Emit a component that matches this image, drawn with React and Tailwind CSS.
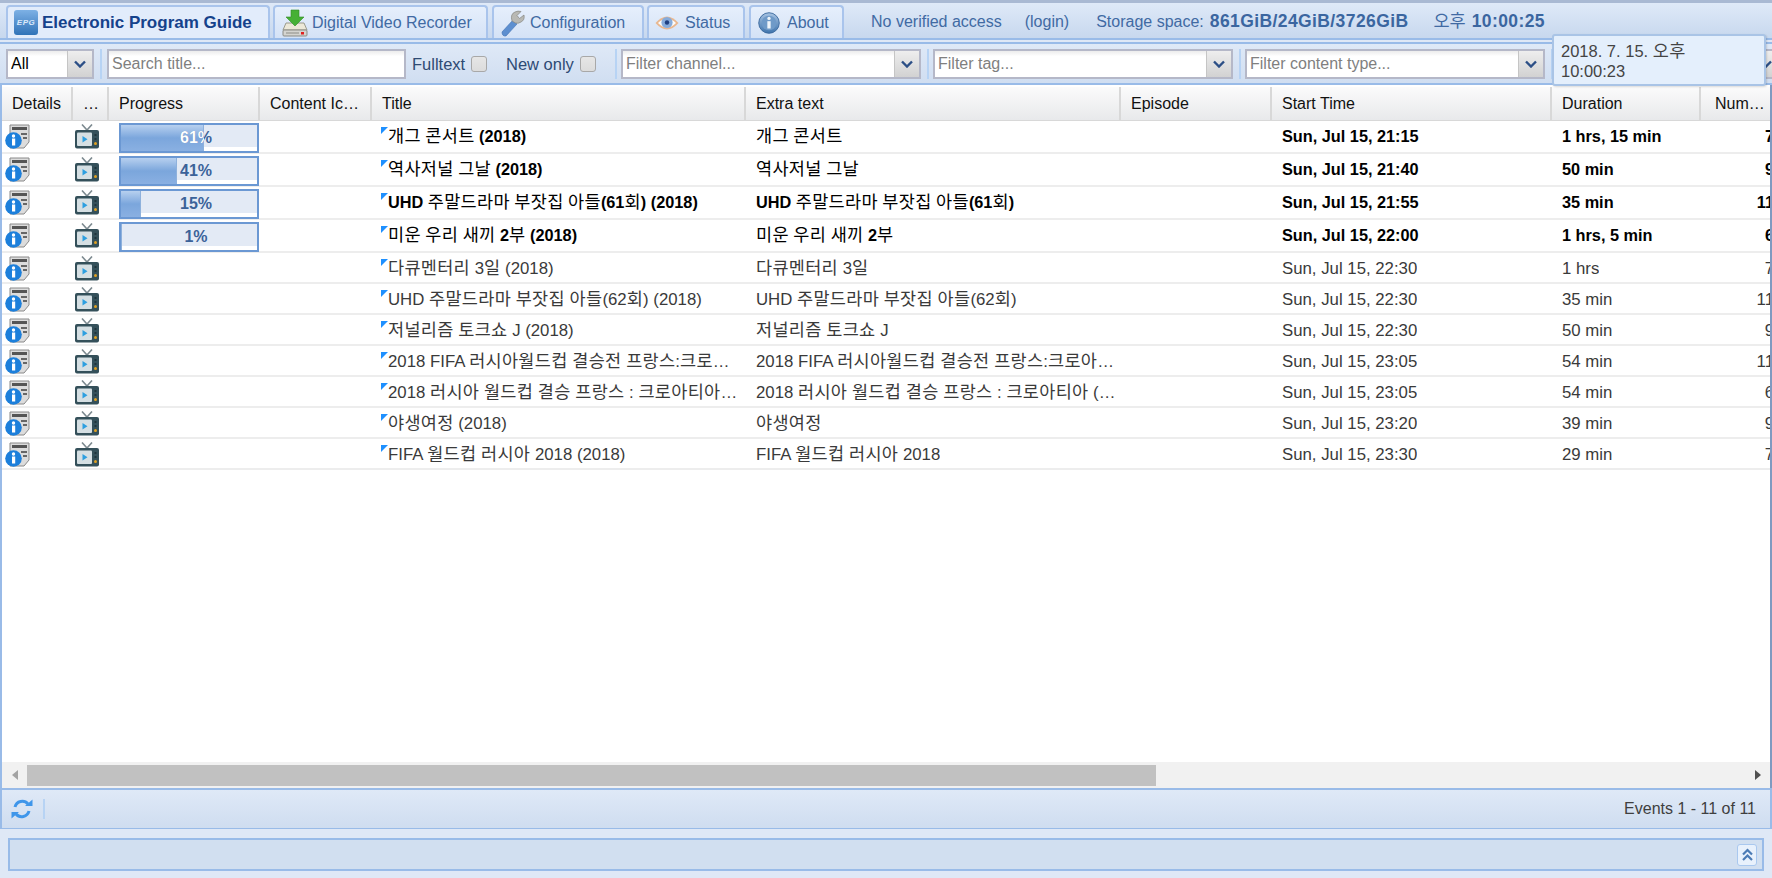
import { useId } from 'react'

const rows = [
  { title: '개그 콘서트 (2018)', extra: '개그 콘서트', start: 'Sun, Jul 15, 21:15', duration: '1 hrs, 15 min', num: '7', progress: 61 },
  { title: '역사저널 그날 (2018)', extra: '역사저널 그날', start: 'Sun, Jul 15, 21:40', duration: '50 min', num: '9', progress: 41 },
  { title: 'UHD 주말드라마 부잣집 아들(61회) (2018)', extra: 'UHD 주말드라마 부잣집 아들(61회)', start: 'Sun, Jul 15, 21:55', duration: '35 min', num: '11', progress: 15 },
  { title: '미운 우리 새끼 2부 (2018)', extra: '미운 우리 새끼 2부', start: 'Sun, Jul 15, 22:00', duration: '1 hrs, 5 min', num: '6', progress: 1 },
  { title: '다큐멘터리 3일 (2018)', extra: '다큐멘터리 3일', start: 'Sun, Jul 15, 22:30', duration: '1 hrs', num: '7' },
  { title: 'UHD 주말드라마 부잣집 아들(62회) (2018)', extra: 'UHD 주말드라마 부잣집 아들(62회)', start: 'Sun, Jul 15, 22:30', duration: '35 min', num: '11' },
  { title: '저널리즘 토크쇼 J (2018)', extra: '저널리즘 토크쇼 J', start: 'Sun, Jul 15, 22:30', duration: '50 min', num: '9' },
  { title: '2018 FIFA 러시아월드컵 결승전 프랑스:크로아티아 (2018)', extra: '2018 FIFA 러시아월드컵 결승전 프랑스:크로아티아 (결승)', start: 'Sun, Jul 15, 23:05', duration: '54 min', num: '11' },
  { title: '2018 러시아 월드컵 결승 프랑스 : 크로아티아 (결승) (2018)', extra: '2018 러시아 월드컵 결승 프랑스 : 크로아티아 (결승)', start: 'Sun, Jul 15, 23:05', duration: '54 min', num: '6' },
  { title: '야생여정 (2018)', extra: '야생여정', start: 'Sun, Jul 15, 23:20', duration: '39 min', num: '9' },
  { title: 'FIFA 월드컵 러시아 2018 (2018)', extra: 'FIFA 월드컵 러시아 2018', start: 'Sun, Jul 15, 23:30', duration: '29 min', num: '7' },
]

const gridCols = 'grid grid-cols-[71px_36px_151px_112px_374px_375px_151px_280px_149px_100px]'

// hangul stays regular weight and a little larger, the way the page renders it
function Mixed({ text }) {
  return text.split(/([가-힣]+)/).map((part, i) =>
    /[가-힣]/.test(part) ? (
      <span key={i} className="text-[17.5px] font-normal tracking-[0.3px]">{part}</span>
    ) : (
      part
    )
  )
}

function EpgLogo() {
  return (
    <span className="flex h-[25px] w-[24px] shrink-0 items-center justify-center rounded-[3px] bg-linear-to-b from-[#7db1e5] to-[#2f73b8]">
      <span className="text-[8px] font-bold italic leading-none tracking-[0.5px] text-[#dbeafa]">EPG</span>
    </span>
  )
}

function DownloadIcon() {
  return (
    <svg width="26" height="28" viewBox="0 0 26 28" className="shrink-0">
      <path d="M4 14 L22 14 L25 21 L1 21 Z" fill="#ece8d8" stroke="#9a9a8c" />
      <rect x="1" y="21" width="24" height="6" rx="1" fill="#d4d4d0" stroke="#8b8b85" />
      <rect x="4" y="23.5" width="13" height="1" fill="#8b8b85" />
      <rect x="19" y="23" width="3" height="2.5" fill="#e02020" />
      <path d="M9 1 H17 V8 H22 L13 17 L4 8 H9 Z" fill="#46b035" stroke="#2f8c25" strokeWidth="0.6" />
    </svg>
  )
}

function WrenchIcon() {
  return (
    <svg width="26" height="28" viewBox="0 0 26 28" className="shrink-0">
      <path d="M2 23 L13 11 L17 15 L6 27 Q2 27.5 2 23 Z" fill="#5d8fd0" stroke="#3f70b2" strokeWidth="0.6" />
      <path d="M12 12 Q10 5 15 3 Q18 1.5 21 2.5 L17 6.5 L19.5 9.5 L24 6 Q25 11 21 13 Q18 15 15.5 14 Z" fill="#b9b9b4" stroke="#85857f" strokeWidth="0.7" />
    </svg>
  )
}

function EyeIcon() {
  return (
    <svg width="24" height="18" viewBox="0 0 24 18" className="shrink-0">
      <path d="M0.5 9 Q12 -4 23.5 9 Q12 22 0.5 9 Z" fill="#e9b78f" />
      <path d="M3 9 Q12 0 21 9 Q12 18 3 9 Z" fill="#fbfbfb" />
      <circle cx="12" cy="8.5" r="5.6" fill="#86abdb" />
      <circle cx="12" cy="8.5" r="2.2" fill="#1f3f80" />
    </svg>
  )
}

function InfoIcon() {
  const id = useId()
  return (
    <svg width="22" height="22" viewBox="0 0 24 24" className="shrink-0">
      <defs>
        <linearGradient id={id} x1="0" y1="0" x2="0" y2="1">
          <stop offset="0" stopColor="#a7c3e2" />
          <stop offset="1" stopColor="#3f74ad" />
        </linearGradient>
      </defs>
      <circle cx="12" cy="12" r="11.2" fill={`url(#${id})`} stroke="#3a689c" />
      <circle cx="12" cy="12" r="8" fill="#6f9ac8" />
      <circle cx="12" cy="7" r="1.8" fill="#eef4fa" />
      <rect x="10.2" y="10" width="3.6" height="8" fill="#eef4fa" />
    </svg>
  )
}

function DetailsIcon() {
  return (
    <svg width="25" height="25" viewBox="0 0 25 25" className="shrink-0">
      <path d="M5 1 H24 V18 L19 24 H5 Z" fill="#dcdcdc" stroke="#8a8a8a" />
      <rect x="7" y="3" width="15" height="3" fill="#555" />
      <rect x="16" y="9" width="6" height="2" fill="#666" />
      <rect x="18" y="13" width="4" height="2" fill="#666" />
      <circle cx="8.5" cy="16.5" r="8.3" fill="#1c7fdb" />
      <circle cx="8.5" cy="12" r="1.7" fill="#fff" />
      <rect x="7" y="14.5" width="3.2" height="7" fill="#fff" />
    </svg>
  )
}

function TvIcon() {
  return (
    <svg width="24" height="25" viewBox="0 0 24 25" className="shrink-0">
      <path d="M7 0.5 L12 6 L17 0.5" fill="none" stroke="#7d8a90" strokeWidth="1.6" />
      <rect x="0" y="6" width="24" height="18.5" rx="2" fill="#34505a" />
      <rect x="2" y="8.5" width="15" height="13.5" rx="1" fill="#d5dfe3" />
      <path d="M7.5 12 L12.5 15.2 L7.5 18.5 Z" fill="#2d9fe0" />
      <circle cx="20.5" cy="19.5" r="1.5" fill="#e0a020" />
      <rect x="19.5" y="10" width="2" height="2" fill="#1f343c" />
      <rect x="19.5" y="14" width="2" height="2" fill="#1f343c" />
    </svg>
  )
}

function RefreshIcon() {
  return (
    <svg width="22" height="22" viewBox="0 0 22 22" className="shrink-0">
      <path d="M4 9 A7.5 7.5 0 0 1 17 6" fill="none" stroke="#3f96ea" strokeWidth="3" />
      <path d="M14 8 H21.5 V1.5 Z" fill="#3f96ea" />
      <path d="M18 13 A7.5 7.5 0 0 1 5 16" fill="none" stroke="#3f96ea" strokeWidth="3" />
      <path d="M8 14 H0.5 V20.5 Z" fill="#3f96ea" />
    </svg>
  )
}

function Tab({ icon, label, active, className }) {
  return (
    <div
      className={`flex h-[33px] items-center rounded-t-[4px] border-2 border-b-0 border-[#a9c4ec] ${
        active ? 'bg-[#e2ecfb] font-bold text-[#15428b]' : 'bg-linear-to-b from-[#e6effc] to-[#d4e2f6] text-[#416aa3]'
      } ${className}`}
    >
      {icon}
      <span className="whitespace-nowrap">{label}</span>
    </div>
  )
}

function Separator() {
  return <div className="ml-[6px] mr-[4px] h-[30px] w-[2px] shrink-0 bg-[#b7d3f4]" />
}

function Combo({ placeholder, value, className }) {
  return (
    <div className={`flex h-[30px] shrink-0 border-2 border-[#b5b8c8] ${className}`}>
      <input
        readOnly
        value={value}
        placeholder={placeholder}
        className="h-full w-full min-w-0 bg-linear-to-b from-[#ececec] to-white to-[20%] px-[3px] text-black outline-none placeholder:text-[#807f7f]"
      />
      <div className="flex w-[25px] shrink-0 items-center justify-center border-l border-[#c5c5c5] bg-linear-to-b from-[#eeeeee] to-[#d2d2d2]">
        <svg width="12" height="8" viewBox="0 0 12 8">
          <path d="M1 1.5 L6 6.5 L11 1.5" fill="none" stroke="#2c4f86" strokeWidth="2.4" />
        </svg>
      </div>
    </div>
  )
}

function Checkbox() {
  return <input type="checkbox" readOnly className="block h-[16px] w-[16px] shrink-0 appearance-none rounded-[3px] border border-[#a8a8a8] bg-linear-to-b from-[#e6e6e6] to-[#dcdcdc]" />
}

function ProgressBar({ value }) {
  return (
    <div className="relative h-[30px] w-[140px] border-2 border-[#6b98d3] bg-[#e3eaf5] text-[16px]">
      <div className="absolute inset-x-0 bottom-0 h-[4px] bg-white" />
      <div className="absolute inset-y-0 left-0 border-r border-[#8eb1dc] bg-linear-to-b from-[#b7d0ef] via-[#7ba6dc] to-[#8ab0e2]" style={{ width: `${value}%` }} />
      <div className="absolute inset-0 flex items-center justify-center pl-[14px] font-bold text-[#3b6299]">{value}%</div>
      {value > 50 && (
        <div className="absolute inset-y-0 left-0 overflow-hidden" style={{ width: `${value}%` }}>
          <div className="flex h-full w-[136px] items-center justify-center pl-[14px] font-bold text-white">{value}%</div>
        </div>
      )}
    </div>
  )
}

function HeaderCell({ label, className = '' }) {
  return (
    <div className={`flex h-[34px] items-center overflow-hidden border-b border-r-2 border-[#d8d8d8] bg-linear-to-b from-[#fbfbfb] to-[#e8e9eb] pl-[10px] pr-[6px] pt-[1px] ${className}`}>
      <span className="whitespace-nowrap">{label}</span>
    </div>
  )
}

function Row({ row }) {
  const live = row.progress !== undefined
  const cell = `flex items-center overflow-hidden ${live ? 'pb-[1px]' : 'pt-[2px]'}`
  return (
    <div className={`${gridCols} border-b-2 border-[#ededed] ${live ? 'h-[33px] text-[16.3px] font-bold text-black' : 'h-[31px] text-[16.8px] text-[#3a3a3a]'}`}>
      <div className="pl-[3px] pt-[3px]"><DetailsIcon /></div>
      <div className="pl-[2px] pt-[3px]"><TvIcon /></div>
      <div className="pl-[10px] pt-[2px]">{live && <ProgressBar value={row.progress} />}</div>
      <div />
      <div className={`relative pl-[10px] pr-[8px] ${cell}`}>
        <span className="absolute left-[9px] top-[6px] h-0 w-0 border-r-[7px] border-t-[7px] border-r-transparent border-t-[#1e90ff]" />
        <span className="truncate pl-[6px]"><Mixed text={row.title} /></span>
      </div>
      <div className={`pl-[10px] pr-[2px] ${cell}`}><span className="truncate"><Mixed text={row.extra} /></span></div>
      <div />
      <div className={`pl-[10px] ${cell}`}><span className="truncate">{row.start}</span></div>
      <div className={`pl-[10px] ${cell}`}><span className="truncate">{row.duration}</span></div>
      <div className={`justify-end pr-[27px] ${cell}`}>{row.num}</div>
    </div>
  )
}

const headers = ['Details', '…', 'Progress', 'Content Ic…', 'Title', 'Extra text', 'Episode', 'Start Time', 'Duration']

export default function App() {
  return (
    <div className="relative flex h-screen w-full flex-col overflow-hidden bg-[#dfe8f6] text-[16px] text-[#111] [font-family:'Liberation_Sans','Noto_Sans_CJK_KR',sans-serif]">
      {/* top tabs */}
      <div className="h-[3px] shrink-0 bg-[#a9b9d3]" />
      <div className="flex h-[35px] shrink-0 items-end bg-linear-to-b from-[#dfe9f8] to-[#c7d8ee] pl-[6px]">
        <Tab active label="Electronic Program Guide" icon={<EpgLogo />} className="w-[264px] gap-[4px] pl-[6px] text-[17px]" />
        <Tab label="Digital Video Recorder" icon={<DownloadIcon />} className="ml-[3px] w-[215px] gap-[4px] pl-[7px]" />
        <Tab label="Configuration" icon={<WrenchIcon />} className="ml-[4px] w-[152px] gap-[4px] pl-[6px]" />
        <Tab label="Status" icon={<EyeIcon />} className="ml-[3px] w-[98px] gap-[6px] pl-[6px]" />
        <Tab label="About" icon={<InfoIcon />} className="ml-[4px] w-[95px] gap-[7px] pl-[7px]" />
        <div className="flex h-[33px] items-center whitespace-nowrap text-[#416aa3]">
          <span className="ml-[27px]">No verified access</span>
          <span className="ml-[23px]">(login)</span>
          <span className="ml-[27px]">Storage space:</span>
          <span className="ml-[6px] text-[17.5px] font-bold tracking-[0.4px] text-[#3b66a0]">861GiB/24GiB/3726GiB</span>
          <span className="ml-[25px] text-[17.5px]">오후</span>
          <span className="ml-[6px] text-[17.5px] font-bold tracking-[0.4px] text-[#3b66a0]">10:00:25</span>
        </div>
      </div>
      <div className="h-[2px] shrink-0 bg-[#99bbe8]" />
      <div className="h-[2px] shrink-0 bg-[#dfe8f6]" />
      <div className="h-[2px] shrink-0 bg-[#99bbe8]" />

      {/* filter toolbar */}
      <div className="flex h-[41px] shrink-0 items-center overflow-hidden border-b-2 border-[#99bbe8] bg-linear-to-b from-[#dfe9f7] to-[#d0def1] pl-[6px] pt-[1px] text-[#333]">
        <Combo value="All" className="w-[88px]" />
        <Separator />
        <input readOnly placeholder="Search title..." className="ml-[1px] h-[30px] w-[299px] shrink-0 border-2 border-[#b5b8c8] bg-linear-to-b from-[#ececec] to-white to-[20%] px-[3px] outline-none placeholder:text-[#807f7f]" />
        <span className="ml-[6px] w-[53px] shrink-0 whitespace-nowrap text-[16.5px] text-[#2e4a73]">Fulltext</span>
        <span className="ml-[6px]"><Checkbox /></span>
        <span className="ml-[19px] w-[68px] shrink-0 whitespace-nowrap text-[16.5px] text-[#2e4a73]">New only</span>
        <span className="ml-[6px]"><Checkbox /></span>
        <div className="ml-[13px]"><Separator /></div>
        <Combo placeholder="Filter channel..." className="w-[300px]" />
        <Separator />
        <Combo placeholder="Filter tag..." className="w-[300px]" />
        <Separator />
        <Combo placeholder="Filter content type..." className="w-[300px]" />
        <Separator />
        <Combo className="w-[223px]" />
      </div>

      {/* grid */}
      <div className="flex min-h-0 flex-1 flex-col border-l-2 border-r-2 border-l-[#99bbe8] border-r-[#7f9ac0] bg-white">
        <div className="min-h-0 flex-1 overflow-hidden">
          <div className="w-[2690px] pt-[2px]">
            <div className={gridCols}>
              {headers.map((label) => (
                <HeaderCell key={label} label={label} />
              ))}
              <HeaderCell label="Num…" className="border-r-0 pl-[14px]" />
            </div>
            {rows.map((row) => (
              <Row key={row.start + row.title} row={row} />
            ))}
          </div>
        </div>

        {/* horizontal scrollbar */}
        <div className="flex h-[26px] shrink-0 items-center bg-[#f1f1f1]">
          <div className="flex w-[25px] shrink-0 justify-center">
            <span className="h-0 w-0 border-y-[5px] border-r-[6px] border-y-transparent border-r-[#a3a3a3]" />
          </div>
          <div className="min-w-0 flex-1">
            <div className="h-[21px] w-[1129px] bg-[#c1c1c1]" />
          </div>
          <div className="flex w-[25px] shrink-0 justify-center">
            <span className="h-0 w-0 border-y-[5px] border-l-[6px] border-y-transparent border-l-[#505050]" />
          </div>
        </div>
      </div>

      {/* paging toolbar */}
      <div className="flex h-[41px] shrink-0 items-center border-x-2 border-b border-t-2 border-[#99bbe8] bg-linear-to-b from-[#dfe9f7] to-[#cfddf0] pl-[9px] pr-[14px] text-[#3f3f3f]">
        <RefreshIcon />
        <div className="ml-[10px] h-[20px] w-[2px] bg-[#b7d3f4]" />
        <span className="ml-auto">Events 1 - 11 of 11</span>
      </div>

      {/* collapsed bottom panel */}
      <div className="px-[8px] pb-[7px] pt-[9px]">
        <div className="flex h-[33px] items-center justify-end border-2 border-[#99bbe8] bg-[#d1dff0] pr-[5px]">
          <div className="flex h-[22px] w-[20px] items-center justify-center rounded-[3px] border border-[#a9c8ef] bg-[#e8f1fc]">
            <svg width="13" height="14" viewBox="0 0 13 14">
              <path d="M2 6.5 L6.5 2 L11 6.5 M2 12 L6.5 7.5 L11 12" fill="none" stroke="#4b7bb5" strokeWidth="2.2" />
            </svg>
          </div>
        </div>
      </div>

      {/* tooltip over the toolbar */}
      <div className="absolute left-[1552px] top-[34px] h-[52px] w-[214px] rounded-[3px] border-2 border-[#a9c4e6] bg-[#e4effc] px-[7px] pt-[5px] text-[16.5px] leading-[20px] text-[#444] shadow-[1px_1px_2px_rgba(0,0,0,0.15)]">
        <div><Mixed text="2018. 7. 15. 오후" /></div>
        <div>10:00:23</div>
      </div>
    </div>
  )
}
